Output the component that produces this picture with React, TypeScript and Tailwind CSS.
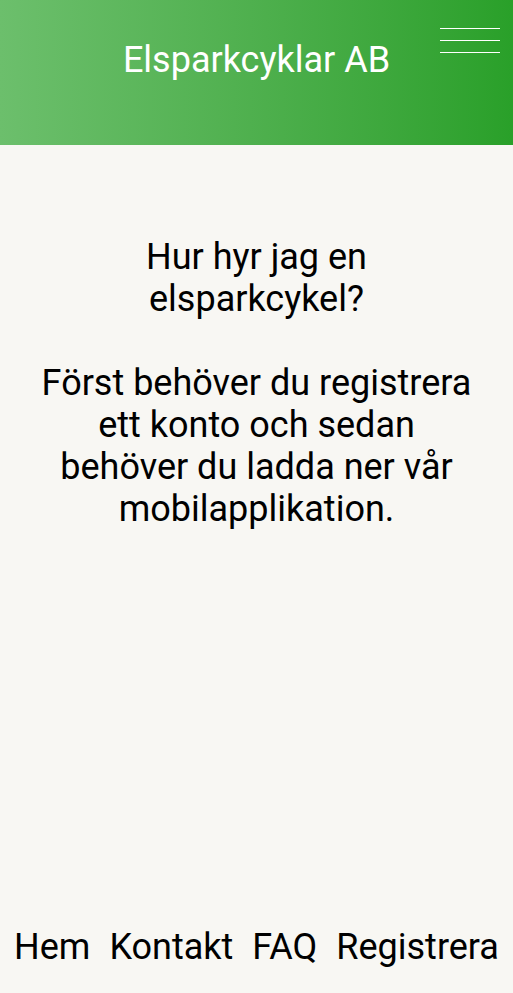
export default function App() {
  return (
    <div
      className="flex min-h-screen flex-col bg-[#f8f7f3] text-black"
      style={{ fontFamily: "Roboto, 'Noto Sans', sans-serif" }}
    >
      <header className="relative h-[145px] bg-gradient-to-r from-[#6cbf6c] to-[#29a029]">
        <h1 className="pt-[36px] text-center text-[36px] leading-[48px] font-normal text-white">
          Elsparkcyklar AB
        </h1>
        <button className="absolute top-[28px] right-[13px] flex w-[60px] flex-col gap-[11px]" aria-label="Meny">
          <span className="block h-px w-full bg-white" />
          <span className="block h-px w-full bg-white" />
          <span className="block h-px w-full bg-white" />
        </button>
      </header>

      <main className="flex-1 px-10 pt-[91px] text-center text-[36px] leading-[42px]">
        <p>
          Hur hyr jag en
          <br />
          elsparkcykel?
        </p>
        <p className="mt-[42px]">
          Först behöver du registrera ett konto och sedan behöver du ladda ner vår mobilapplikation.
        </p>
      </main>

      <footer className="flex justify-center gap-[19px] pb-[25px] text-[36px] leading-[42px]">
        <a href="#">Hem</a>
        <a href="#">Kontakt</a>
        <a href="#">FAQ</a>
        <a href="#">Registrera</a>
      </footer>
    </div>
  );
}
